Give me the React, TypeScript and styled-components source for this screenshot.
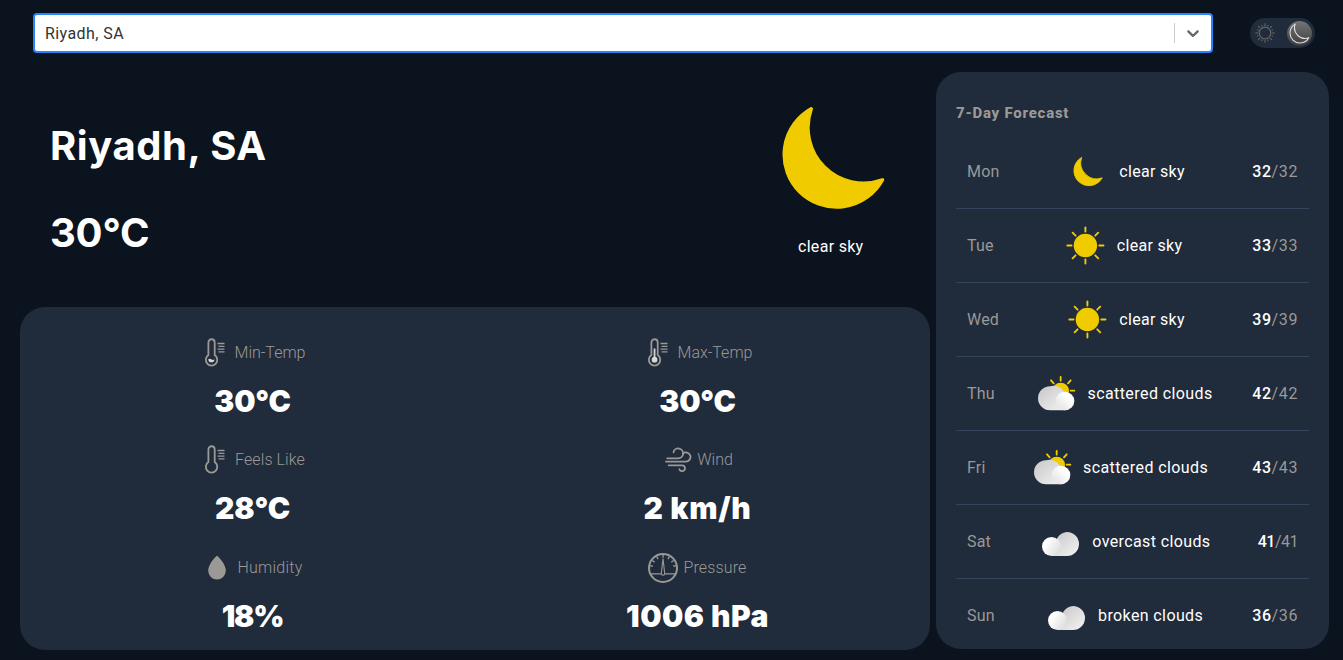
import React from 'react';
import styled, { createGlobalStyle } from 'styled-components';

const GlobalStyle = createGlobalStyle`
  * { box-sizing: border-box; }
  body {
    margin: 0;
    background: #0b131e;
    color: #fff;
    font-family: Roboto, "Liberation Sans", sans-serif;
    font-size: 16px;
    overflow: hidden;
  }
`;

const Page = styled.div`
  width: 1343px;
  height: 660px;
  display: flex;
  flex-direction: column;
`;

const TopBar = styled.header`
  height: 72px;
  padding: 13px 28px 0 33px;
  display: flex;
  justify-content: space-between;
`;

const Select = styled.div`
  width: 1180px;
  height: 40px;
  display: flex;
  align-items: center;
  background: #fff;
  border: 2px solid #2684ff;
  border-radius: 4px;
`;

const SelectValue = styled.span`
  flex: 1;
  padding-left: 10px;
  color: #333;
  letter-spacing: 0.42px;
`;

const SelectDivider = styled.span`
  width: 1px;
  height: 20px;
  background: #ccc;
`;

const SelectArrow = styled.span`
  width: 36px;
  display: flex;
  justify-content: center;
  color: #666;
`;

const Toggle = styled.div`
  width: 65px;
  height: 30px;
  margin-top: 5px;
  padding: 0 3px 0 5px;
  display: flex;
  align-items: center;
  justify-content: space-between;
  border-radius: 15px;
  background: #202b3b;
`;

const Knob = styled.span`
  width: 25px;
  height: 25px;
  display: flex;
  align-items: center;
  justify-content: center;
  border-radius: 50%;
  background: linear-gradient(#757575, #3d3d3d);
`;

const Columns = styled.main`
  display: flex;
  padding-left: 20px;
  gap: 6px;
`;

const Current = styled.section`
  width: 910px;
  display: flex;
  flex-direction: column;
`;

const Hero = styled.div`
  height: 235px;
  padding: 33px 45px 0 30px;
  display: flex;
  justify-content: space-between;
`;

const Headline = styled.div`
  padding-top: 17px;
`;

const Title = styled.h1<{ $track?: number }>`
  margin: 0 0 39px;
  font-family: Inter, sans-serif;
  font-size: 40px;
  line-height: 48px;
  font-weight: 700;
  letter-spacing: ${(p) => p.$track ?? 0}px;
`;

const Condition = styled.div`
  width: 104px;
  display: flex;
  flex-direction: column;
  gap: 26px;
  line-height: 22px;
  letter-spacing: 0.3px;
`;

const ConditionText = styled.span`
  padding-left: 17px;
`;

const Details = styled.div`
  height: 343px;
  padding: 10px;
  display: grid;
  grid-template-columns: 1fr 1fr;
  grid-auto-rows: 107.3px;
  border-radius: 25px;
  background: #202b3b;
`;

const Stat = styled.div`
  display: flex;
  flex-direction: column;
  align-items: center;
  padding-top: 20px;
`;

const StatLabel = styled.div<{ $track?: number }>`
  height: 32px;
  display: flex;
  align-items: center;
  gap: 5px;
  color: #9a9996;
  font-weight: 300;
  letter-spacing: ${(p) => p.$track ?? 0}px;
`;

const StatName = styled.span`
  padding-bottom: 1px;
`;

const StatValue = styled.div<{ $track?: number }>`
  margin-top: 14px;
  font-family: Inter, sans-serif;
  font-size: 30px;
  line-height: 36px;
  font-weight: 900;
  letter-spacing: ${(p) => p.$track ?? 0}px;
`;

const Forecast = styled.aside`
  width: 393px;
  height: 577px;
  padding: 30px 20px 0;
  border-radius: 25px;
  background: #202b3b;
`;

const ForecastTitle = styled.h2`
  margin: 0 0 11px;
  color: #9a9996;
  font-size: 15px;
  line-height: 22px;
  font-weight: 800;
  letter-spacing: 0.75px;
`;

const Day = styled.div`
  height: 74px;
  padding: 0 11px;
  display: flex;
  align-items: center;
  justify-content: space-between;
  border-bottom: 1px solid #34445c;
  &:last-child { border-bottom-color: transparent; }
`;

const DayName = styled.span<{ $w: number }>`
  width: ${(p) => p.$w}px;
  color: #9a9996;
  letter-spacing: 0.2px;
`;

const DayWeather = styled.span<{ $track: number }>`
  display: flex;
  align-items: center;
  gap: 8px;
  letter-spacing: ${(p) => p.$track}px;
`;

const Temps = styled.span<{ $track?: number }>`
  letter-spacing: ${(p) => p.$track ?? 0.6}px;
  font-weight: 500;
`;

const Low = styled.span`
  color: #9a9996;
  font-weight: 400;
`;

const YELLOW = '#f0cb00';
const MOON = 'M28.8 2.8A51.6 51.6 0 1 0 99 72.8A54.8 54.8 0 0 1 28.8 2.8Z';

const BigMoon = () => (
  <svg width="105" height="105" viewBox="-1 -1 103.500 103.500">
    <path d={MOON} fill={YELLOW} stroke={YELLOW} strokeWidth="3.400" strokeLinejoin="round" />
  </svg>
);

const SmallMoon = () => (
  <svg width="45" height="45" viewBox="0 0 45 45">
    <path d={MOON} fill={YELLOW} stroke={YELLOW} strokeWidth="3" strokeLinejoin="round" transform="translate(7.3 7.6) scale(.292)" />
  </svg>
);

const Sun = () => (
  <svg width="45" height="45" viewBox="0 0 45 45">
    <circle cx="21.4" cy="22.5" r="11.7" fill={YELLOW} />
    {[0, 45, 90, 135, 180, 225, 270, 315].map((a) => (
      <path key={a} d="M21.4 8.600v-4.200" stroke={YELLOW} strokeWidth="1.900" strokeLinecap="round" transform={`rotate(${a} 21.4 22.5)`} />
    ))}
  </svg>
);

const SunCloud = () => (
  <svg width="45" height="45" viewBox="0 0 135 135">
    <defs>
      <linearGradient id="back" x1="0" y1="0" x2="1" y2="1">
        <stop offset=".2" stopColor="#cfcfcf" />
        <stop offset="1" stopColor="#f2f2f2" />
      </linearGradient>
      <linearGradient id="front" x1="0" y1="1" x2="1" y2="0">
        <stop offset="0" stopColor="#dedede" />
        <stop offset=".7" stopColor="#fff" />
      </linearGradient>
    </defs>
    <circle cx="80" cy="60" r="25" fill={YELLOW} />
    <path d="M80 29V18M59 37l-8-9M102 37l8-9M110 59h11" stroke={YELLOW} strokeWidth="5.5" strokeLinecap="round" />
    <path d="M48 46a36 36 0 0 0 0 72h46V73A36 36 0 0 0 48 46Z" fill="url(#back)" />
    <circle cx="93" cy="90" r="28" fill="url(#front)" />
  </svg>
);

const Clouds = () => (
  <svg width="45" height="45" viewBox="0 0 135 135">
    <defs>
      <linearGradient id="big" x1="0" y1="0" x2="1" y2="1">
        <stop offset=".2" stopColor="#cfcfcf" />
        <stop offset="1" stopColor="#f4f4f4" />
      </linearGradient>
      <linearGradient id="small" x1="0" y1="0" x2="1" y2=".6">
        <stop offset=".3" stopColor="#fff" />
        <stop offset="1" stopColor="#dfdfdf" />
      </linearGradient>
    </defs>
    <path d="M84 39a36 36 0 0 1 0 72H38V84H51A36 36 0 0 1 84 39Z" fill="url(#big)" />
    <circle cx="37.500" cy="82.500" r="28.500" fill="url(#small)" />
  </svg>
);

const Thermometer = ({ level }: { level?: 'low' | 'high' }) => (
  <svg width="30" height="30" viewBox="0 0 30 30" fill="none" stroke="#9a9996">
    <path d="M8.400 17.100V4.400a3.150 3.150 0 0 1 6.300 0v12.700a5.700 5.700 0 1 1-6.300 0Z" strokeWidth="1.800" />
    <path d="M17.500 5.500h7M18.500 8.300h6M17.500 11.100h7M18.500 13.900h6" strokeWidth="1.300" />
    {level === 'low' && <path d="M8.300 21.200q1.700-.8 3.200.3t3-.3a3 3 0 0 1-6.200 0Z" fill="#d8d8d6" stroke="none" />}
    {level === 'high' && (
      <g stroke="#d8d8d6">
        <path d="M11.550 10.500v10" strokeWidth="1.800" />
        <circle cx="11.550" cy="21.700" r="2.900" fill="#d8d8d6" stroke="none" />
      </g>
    )}
  </svg>
);

const Wind = () => (
  <svg width="30" height="30" viewBox="0 0 30 30" fill="none" stroke="#9a9996" strokeWidth="1.800" strokeLinecap="round">
    <path d="M5.200 13.300H16a4.900 4.900 0 1 0-4.500-6" />
    <path d="M3.900 16.600h20a4.600 4.600 0 1 0-3-8.100" />
    <path d="M6.700 20.300h13.500a2.900 2.900 0 1 1-2.800 4" />
  </svg>
);

const Drop = () => (
  <svg width="30" height="30" viewBox="0 0 30 30">
    <path d="M15 2.700C12 5.200 6.200 11.500 6.200 17.700a8.800 8.800 0 0 0 17.600 0C23.800 11.500 18 5.200 15 2.700Z" fill="#9a9996" />
  </svg>
);

const Gauge = () => (
  <svg width="30" height="30" viewBox="0 0 30 30" fill="none" stroke="#9a9996">
    <circle cx="15" cy="15" r="14" strokeWidth="2" />
    <path d="M2.500 20.800H13M17 20.800H27.500" strokeWidth="1.200" />
    <path d="M15 5.500L13.300 20.500a1.700 1.700 0 1 0 3.400 0Z" strokeWidth="1.100" />
    {[-80, -55, -29, 0, 29, 55, 80].map((a) => (
      <path key={a} d="M15 2v2.800" strokeWidth="1.300" transform={`rotate(${a} 15 15)`} />
    ))}
  </svg>
);

const ToggleSun = () => (
  <svg width="20" height="20" viewBox="0 0 20 20" fill="none" stroke="#686765">
    <circle cx="10" cy="10" r="5.800" strokeWidth="1.200" />
    {Array.from({ length: 16 }, (_, i) => (
      <path key={i} d={i % 2 ? 'M10 2.900v-1.500' : 'M10 2.900V.2'} strokeWidth="1.100" transform={`rotate(${i * 22.5} 10 10)`} />
    ))}
  </svg>
);

const ToggleMoon = () => (
  <svg width="21" height="21" viewBox="-3 -3 108 108">
    <path d={MOON} fill="none" stroke="#e0e0e0" strokeWidth="5.500" strokeLinejoin="round" />
  </svg>
);

const stats = [
  { label: 'Min-Temp', lt: 0, value: '30°C', vt: -0.1, icon: <Thermometer level="low" /> },
  { label: 'Max-Temp', lt: 0, value: '30°C', vt: -0.1, icon: <Thermometer level="high" /> },
  { label: 'Feels Like', lt: 0.1, value: '28°C', vt: -0.1, icon: <Thermometer /> },
  { label: 'Wind', lt: 0, value: '2 km/h', vt: 0.75, icon: <Wind /> },
  { label: 'Humidity', lt: 0.25, value: '18%', vt: -1.2, icon: <Drop /> },
  { label: 'Pressure', lt: 0.15, value: '1006 hPa', vt: 0.5, icon: <Gauge /> },
];

const days = [
  { day: 'Mon', w: 32, icon: <SmallMoon />, text: 'clear sky', track: 0.3, temp: 32 },
  { day: 'Tue', w: 27, icon: <Sun />, text: 'clear sky', track: 0.3, temp: 33 },
  { day: 'Wed', w: 32, icon: <Sun />, text: 'clear sky', track: 0.3, temp: 39 },
  { day: 'Thu', w: 28, icon: <SunCloud />, text: 'scattered clouds', track: 0.42, temp: 42 },
  { day: 'Fri', w: 19, icon: <SunCloud />, text: 'scattered clouds', track: 0.42, temp: 43 },
  { day: 'Sat', w: 25, icon: <Clouds />, text: 'overcast clouds', track: 0.38, temp: 41, tt: -0.5 },
  { day: 'Sun', w: 29, icon: <Clouds />, text: 'broken clouds', track: 0.38, temp: 36 },
];

export default function App() {
  return (
    <Page>
      <GlobalStyle />
      <TopBar>
        <Select>
          <SelectValue>Riyadh, SA</SelectValue>
          <SelectDivider />
          <SelectArrow>
            <svg height="20" width="20" viewBox="0 0 20 20" fill="currentColor">
              <path d="M4.516 7.548c0.436-0.446 1.043-0.481 1.576 0l3.908 3.747 3.908-3.747c0.533-0.481 1.141-0.446 1.574 0 0.436 0.445 0.408 1.197 0 1.615-0.406 0.418-4.695 4.502-4.695 4.502-0.217 0.223-0.502 0.335-0.787 0.335s-0.570-0.112-0.789-0.335c0 0-4.287-4.084-4.695-4.502s-0.436-1.170 0-1.615z" />
            </svg>
          </SelectArrow>
        </Select>
        <Toggle>
          <ToggleSun />
          <Knob>
            <ToggleMoon />
          </Knob>
        </Toggle>
      </TopBar>
      <Columns>
        <Current>
          <Hero>
            <Headline>
              <Title $track={0.55}>Riyadh, SA</Title>
              <Title $track={-0.2}>30°C</Title>
            </Headline>
            <Condition>
              <BigMoon />
              <ConditionText>clear sky</ConditionText>
            </Condition>
          </Hero>
          <Details>
            {stats.map((s) => (
              <Stat key={s.label}>
                <StatLabel $track={s.lt}>
                  {s.icon}
                  <StatName>{s.label}</StatName>
                </StatLabel>
                <StatValue $track={s.vt}>{s.value}</StatValue>
              </Stat>
            ))}
          </Details>
        </Current>
        <Forecast>
          <ForecastTitle>7-Day Forecast</ForecastTitle>
          {days.map((d) => (
            <Day key={d.day}>
              <DayName $w={d.w}>{d.day}</DayName>
              <DayWeather $track={d.track}>
                {d.icon}
                {d.text}
              </DayWeather>
              <Temps $track={d.tt}>
                {d.temp}
                <Low>/{d.temp}</Low>
              </Temps>
            </Day>
          ))}
        </Forecast>
      </Columns>
    </Page>
  );
}
